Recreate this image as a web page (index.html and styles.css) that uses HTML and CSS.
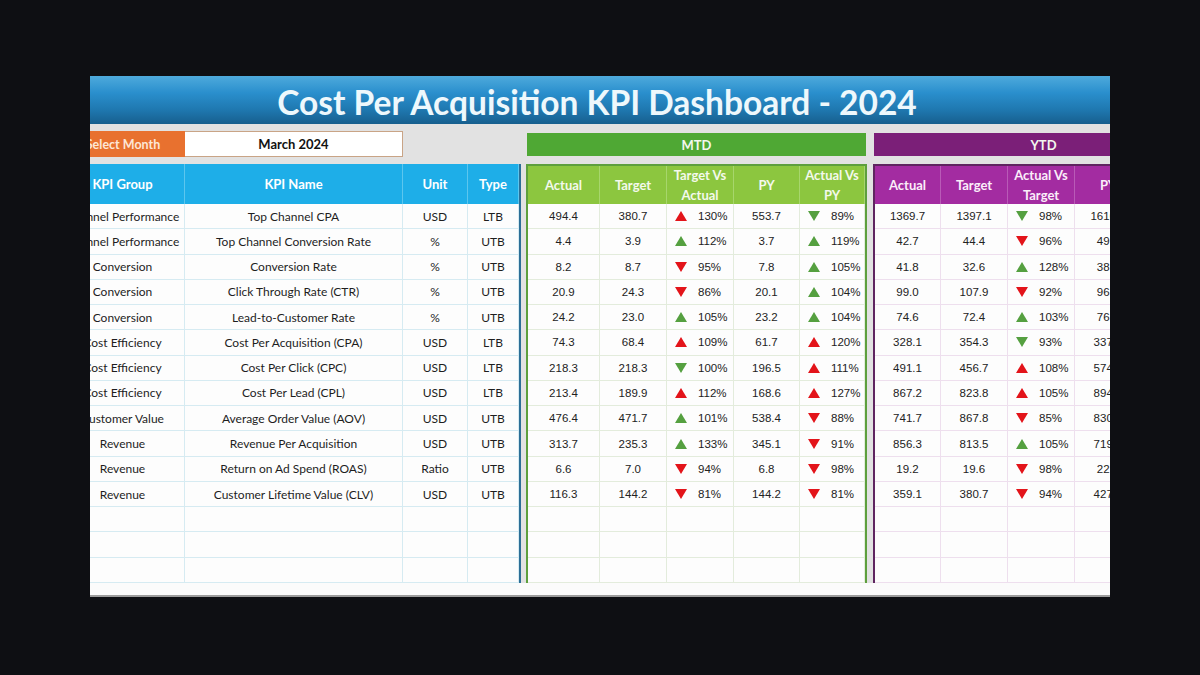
FILE: index.html
```html
<!DOCTYPE html>
<html lang="en">
<head>
<meta charset="utf-8">
<title>Cost Per Acquisition KPI Dashboard - 2024</title>
<link rel="stylesheet" href="styles.css">
</head>
<body>
<div class="panel">
  <div class="title">Cost Per Acquisition KPI Dashboard - 2024</div>
  <div class="body">
    <div class="grp grp-kpi">
      <div class="topbar"><div class="sel-label">Select Month</div><div class="sel-input">March 2024</div></div>
      <div class="tbl tbl-kpi">
        <div class="h">KPI Group</div><div class="h">KPI Name</div><div class="h">Unit</div><div class="h">Type</div>
        <div class="c">Channel Performance</div><div class="c">Top Channel CPA</div><div class="c">USD</div><div class="c">LTB</div>
        <div class="c">Channel Performance</div><div class="c">Top Channel Conversion Rate</div><div class="c">%</div><div class="c">UTB</div>
        <div class="c">Conversion</div><div class="c">Conversion Rate</div><div class="c">%</div><div class="c">UTB</div>
        <div class="c">Conversion</div><div class="c">Click Through Rate (CTR)</div><div class="c">%</div><div class="c">UTB</div>
        <div class="c">Conversion</div><div class="c">Lead-to-Customer Rate</div><div class="c">%</div><div class="c">UTB</div>
        <div class="c">Cost Efficiency</div><div class="c">Cost Per Acquisition (CPA)</div><div class="c">USD</div><div class="c">LTB</div>
        <div class="c">Cost Efficiency</div><div class="c">Cost Per Click (CPC)</div><div class="c">USD</div><div class="c">LTB</div>
        <div class="c">Cost Efficiency</div><div class="c">Cost Per Lead (CPL)</div><div class="c">USD</div><div class="c">LTB</div>
        <div class="c">Customer Value</div><div class="c">Average Order Value (AOV)</div><div class="c">USD</div><div class="c">UTB</div>
        <div class="c">Revenue</div><div class="c">Revenue Per Acquisition</div><div class="c">USD</div><div class="c">UTB</div>
        <div class="c">Revenue</div><div class="c">Return on Ad Spend (ROAS)</div><div class="c">Ratio</div><div class="c">UTB</div>
        <div class="c">Revenue</div><div class="c">Customer Lifetime Value (CLV)</div><div class="c">USD</div><div class="c">UTB</div>
        <div class="c"></div><div class="c"></div><div class="c"></div><div class="c"></div>
        <div class="c"></div><div class="c"></div><div class="c"></div><div class="c"></div>
        <div class="c"></div><div class="c"></div><div class="c"></div><div class="c"></div>
      </div>
    </div>

    <div class="grp grp-mtd">
      <div class="topbar"><div class="band band-mtd">MTD</div></div>
      <div class="tbl tbl-mtd">
        <div class="h">Actual</div><div class="h">Target</div><div class="h">Target Vs<br>Actual</div><div class="h">PY</div><div class="h">Actual Vs<br>PY</div>
        <div class="c n">494.4</div><div class="c n">380.7</div><div class="c n ind"><i class="tri up r"></i>130%</div><div class="c n">553.7</div><div class="c n ind"><i class="tri dn g"></i>89%</div>
        <div class="c n">4.4</div><div class="c n">3.9</div><div class="c n ind"><i class="tri up g"></i>112%</div><div class="c n">3.7</div><div class="c n ind"><i class="tri up g"></i>119%</div>
        <div class="c n">8.2</div><div class="c n">8.7</div><div class="c n ind"><i class="tri dn r"></i>95%</div><div class="c n">7.8</div><div class="c n ind"><i class="tri up g"></i>105%</div>
        <div class="c n">20.9</div><div class="c n">24.3</div><div class="c n ind"><i class="tri dn r"></i>86%</div><div class="c n">20.1</div><div class="c n ind"><i class="tri up g"></i>104%</div>
        <div class="c n">24.2</div><div class="c n">23.0</div><div class="c n ind"><i class="tri up g"></i>105%</div><div class="c n">23.2</div><div class="c n ind"><i class="tri up g"></i>104%</div>
        <div class="c n">74.3</div><div class="c n">68.4</div><div class="c n ind"><i class="tri up r"></i>109%</div><div class="c n">61.7</div><div class="c n ind"><i class="tri up r"></i>120%</div>
        <div class="c n">218.3</div><div class="c n">218.3</div><div class="c n ind"><i class="tri dn g"></i>100%</div><div class="c n">196.5</div><div class="c n ind"><i class="tri up r"></i>111%</div>
        <div class="c n">213.4</div><div class="c n">189.9</div><div class="c n ind"><i class="tri up r"></i>112%</div><div class="c n">168.6</div><div class="c n ind"><i class="tri up r"></i>127%</div>
        <div class="c n">476.4</div><div class="c n">471.7</div><div class="c n ind"><i class="tri up g"></i>101%</div><div class="c n">538.4</div><div class="c n ind"><i class="tri dn r"></i>88%</div>
        <div class="c n">313.7</div><div class="c n">235.3</div><div class="c n ind"><i class="tri up g"></i>133%</div><div class="c n">345.1</div><div class="c n ind"><i class="tri dn r"></i>91%</div>
        <div class="c n">6.6</div><div class="c n">7.0</div><div class="c n ind"><i class="tri dn r"></i>94%</div><div class="c n">6.8</div><div class="c n ind"><i class="tri dn r"></i>98%</div>
        <div class="c n">116.3</div><div class="c n">144.2</div><div class="c n ind"><i class="tri dn r"></i>81%</div><div class="c n">144.2</div><div class="c n ind"><i class="tri dn r"></i>81%</div>
        <div class="c"></div><div class="c"></div><div class="c"></div><div class="c"></div><div class="c"></div>
        <div class="c"></div><div class="c"></div><div class="c"></div><div class="c"></div><div class="c"></div>
        <div class="c"></div><div class="c"></div><div class="c"></div><div class="c"></div><div class="c"></div>
      </div>
    </div>

    <div class="grp grp-ytd">
      <div class="topbar"><div class="band band-ytd">YTD</div></div>
      <div class="tbl tbl-ytd">
        <div class="h">Actual</div><div class="h">Target</div><div class="h">Actual Vs<br>Target</div><div class="h">PY</div><div class="h">Actual Vs<br>PY</div>
        <div class="c n">1369.7</div><div class="c n">1397.1</div><div class="c n ind"><i class="tri dn g"></i>98%</div><div class="c n">1616.2</div><div class="c n ind"><i class="tri dn r"></i>85%</div>
        <div class="c n">42.7</div><div class="c n">44.4</div><div class="c n ind"><i class="tri dn r"></i>96%</div><div class="c n">49.1</div><div class="c n ind"><i class="tri dn r"></i>87%</div>
        <div class="c n">41.8</div><div class="c n">32.6</div><div class="c n ind"><i class="tri up g"></i>128%</div><div class="c n">38.5</div><div class="c n ind"><i class="tri up g"></i>109%</div>
        <div class="c n">99.0</div><div class="c n">107.9</div><div class="c n ind"><i class="tri dn r"></i>92%</div><div class="c n">96.2</div><div class="c n ind"><i class="tri up g"></i>103%</div>
        <div class="c n">74.6</div><div class="c n">72.4</div><div class="c n ind"><i class="tri up g"></i>103%</div><div class="c n">76.3</div><div class="c n ind"><i class="tri dn r"></i>98%</div>
        <div class="c n">328.1</div><div class="c n">354.3</div><div class="c n ind"><i class="tri dn g"></i>93%</div><div class="c n">337.9</div><div class="c n ind"><i class="tri dn g"></i>97%</div>
        <div class="c n">491.1</div><div class="c n">456.7</div><div class="c n ind"><i class="tri up r"></i>108%</div><div class="c n">574.2</div><div class="c n ind"><i class="tri dn g"></i>86%</div>
        <div class="c n">867.2</div><div class="c n">823.8</div><div class="c n ind"><i class="tri up r"></i>105%</div><div class="c n">894.1</div><div class="c n ind"><i class="tri dn g"></i>97%</div>
        <div class="c n">741.7</div><div class="c n">867.8</div><div class="c n ind"><i class="tri dn r"></i>85%</div><div class="c n">830.6</div><div class="c n ind"><i class="tri dn r"></i>89%</div>
        <div class="c n">856.3</div><div class="c n">813.5</div><div class="c n ind"><i class="tri up g"></i>105%</div><div class="c n">719.8</div><div class="c n ind"><i class="tri up g"></i>119%</div>
        <div class="c n">19.2</div><div class="c n">19.6</div><div class="c n ind"><i class="tri dn r"></i>98%</div><div class="c n">22.4</div><div class="c n ind"><i class="tri dn r"></i>86%</div>
        <div class="c n">359.1</div><div class="c n">380.7</div><div class="c n ind"><i class="tri dn r"></i>94%</div><div class="c n">427.3</div><div class="c n ind"><i class="tri dn r"></i>84%</div>
        <div class="c"></div><div class="c"></div><div class="c"></div><div class="c"></div><div class="c"></div>
        <div class="c"></div><div class="c"></div><div class="c"></div><div class="c"></div><div class="c"></div>
        <div class="c"></div><div class="c"></div><div class="c"></div><div class="c"></div><div class="c"></div>
      </div>
    </div>
  </div>
  <div class="foot"></div>
</div>
</body>
</html>
```

FILE: styles.css
```css
html, body {
  margin: 0;
  padding: 0;
}
body {
  width: 1200px;
  height: 675px;
  background: #0e0f13;
  overflow: hidden;
  font-family: "Lato", "Liberation Sans", sans-serif;
}
.panel {
  width: 1020px;
  height: 521px;
  margin: 76px 0 0 90px;
  overflow: hidden;
  background: #e2e2e2;
  display: flex;
  flex-direction: column;
}
.title {
  height: 48px;
  flex-shrink: 0;
  background: linear-gradient(#4eaadc 0%, #2a8fcd 35%, #1f78b0 70%, #175f8e 100%);
  color: #eef8fc;
  font-weight: 700;
  font-size: 33.5px;
  line-height: 52px;
  text-align: center;
  padding-right: 6px;
  box-sizing: border-box;
  white-space: nowrap;
}
.body {
  display: flex;
  margin-left: -29px;
  height: 459px;
  flex-shrink: 0;
}
.grp {
  flex-shrink: 0;
  padding-top: 7px;
  display: flex;
  flex-direction: column;
}
.grp-kpi { width: 460px; }
.grp-mtd { width: 341px; margin-left: 5px; }
.grp-ytd { width: 340px; margin-left: 6px; }
.topbar {
  height: 26px;
  margin-bottom: 7px;
  display: flex;
}
.sel-label {
  width: 124px;
  background: #e8712f;
  color: #fde6d6;
  font-weight: 700;
  font-size: 12.5px;
  display: flex;
  align-items: center;
  justify-content: center;
}
.sel-input {
  width: 218px;
  box-sizing: border-box;
  background: #ffffff;
  border: 1px solid #c9a486;
  border-left: none;
  color: #111;
  font-weight: 700;
  font-size: 13px;
  display: flex;
  align-items: center;
  justify-content: center;
}
.band {
  flex: 1;
  margin: 2px 1px 1px;
  display: flex;
  align-items: center;
  justify-content: center;
  font-weight: 700;
  font-size: 13px;
  color: #f3f7ee;
}
.band-mtd { background: #4fa834; }
.band-ytd { background: #7b1f78; margin-right: 0; }
.tbl {
  display: grid;
  grid-template-rows: 40px;
  grid-auto-rows: 25.27px;
  background: #fdfdfd;
  box-sizing: border-box;
}
.tbl-kpi {
  grid-template-columns: 124px 218px 65px 51px;
  border-right: 2px solid #2c6f97;
}
.tbl-mtd {
  grid-template-columns: 72px 67px 67px 66px 65px;
  grid-template-rows: 38px;
  border: 2px solid #5d9f3d;
  border-bottom: none;
}
.tbl-ytd {
  grid-template-columns: 66px 67px 67px 67px 67px;
  grid-template-rows: 38px;
  border: 2px solid #5f2560;
  border-bottom: none;
  border-right: none;
}
.h {
  display: flex;
  align-items: center;
  justify-content: center;
  text-align: center;
  font-weight: 700;
  font-size: 13px;
  line-height: 20px;
  color: #ffffff;
}
.tbl-kpi .h { background: #1eaee8; border-right: 1px solid #5cc6ee; }
.tbl-mtd .h { background: #8cc63f; border-right: 1px solid #a7d66c; color: #f4f9ec; }
.tbl-ytd .h { background: #a32ca1; border-right: 1px solid #b95ab7; color: #fbeefa; }
.c {
  display: flex;
  align-items: center;
  justify-content: center;
  font-size: 12px;
  color: #1e1e1e;
  white-space: nowrap;
  overflow: hidden;
}
.tbl-kpi .c { border-right: 1px solid #d6ebf2; border-bottom: 1px solid #d6ebf2; }
.tbl-mtd .c { border-right: 1px solid #e3ecdc; border-bottom: 1px solid #e3ecdc; }
.tbl-ytd .c { border-right: 1px solid #eedfee; border-bottom: 1px solid #eedfee; }
.n {
  font-family: "Liberation Sans", Arial, sans-serif;
  font-size: 11.5px;
  color: #222;
}
.ind {
  justify-content: flex-start;
  padding-left: 8px;
  gap: 11px;
}
.tri {
  display: inline-block;
  width: 0;
  height: 0;
  border-left: 6px solid transparent;
  border-right: 6px solid transparent;
}
.tri.up { border-bottom: 10px solid currentColor; }
.tri.dn { border-top: 10px solid currentColor; }
.tri.r { color: #e3141a; }
.tri.g { color: #55a040; }
.foot {
  height: 12px;
  flex-shrink: 0;
  background: #fbfbfb;
  border-bottom: 2px solid #9c9c9c;
}
```
